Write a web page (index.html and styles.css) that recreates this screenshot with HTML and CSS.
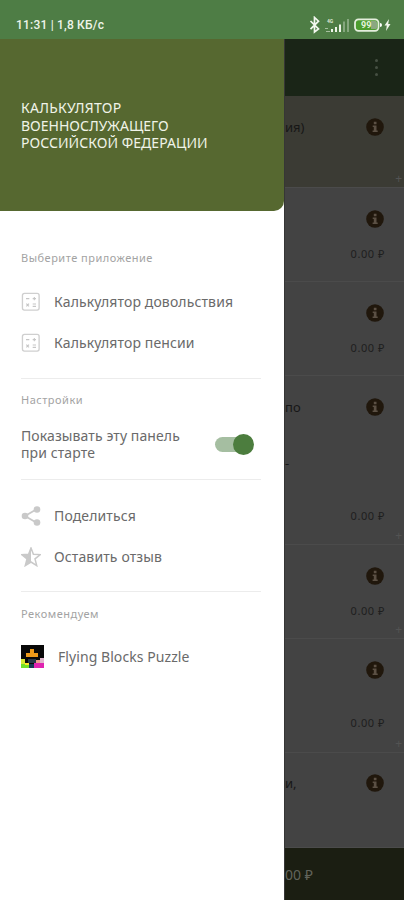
FILE: index.html
```
<!DOCTYPE html>
<html lang="ru">
<head>
<meta charset="utf-8">
<title>Калькулятор военнослужащего</title>
<link rel="stylesheet" href="styles.css">
</head>
<body>
<svg width="0" height="0" class="defs">
  <symbol id="info" viewBox="0 0 18 18"><circle cx="9" cy="9" r="8.8" fill="#20170c"/><path d="M7.8 3.8h2.7v2.4H7.800zM6.700 7.500h3.800v5h1.200v1.400H6.600v-1.400h1.200V9H6.700z" fill="#5b5044"/></symbol>
  <symbol id="calc" viewBox="0 0 18 18"><rect x="1.3" y="1.3" width="15" height="15" rx="1.8" fill="none" stroke="#cfcfcf" stroke-width="1.2"/><path d="M4.5 6h3M10.5 6h3M12 4.5v3M4.8 10.5l2.4 2.4M7.2 10.5l-2.4 2.4M10.5 10.8h3M10.5 12.900h3" stroke="#c6c6c6" fill="none"/></symbol>
</svg>
<header class="status">
  <span class="clock">11:31 | 1,8 КБ/с</span>
  <svg class="status-icons" width="82" height="18" viewBox="0 0 82 18">
    <path d="M1.500 5l8 8L5.500 16V1.500l4 3.700-8 8" fill="none" stroke="#f4f8f0" stroke-width="1.700"/>
    <g fill="#eef5e9"><path d="M22 13h2v3h-2zM26 11h2v5h-2zM30 8.500h2v7.500h-2z"/><path opacity=".35" d="M34 5.500h2v10.500h-2zM38 3h2v13h-2z"/><path opacity=".55" d="M16 12h3v1h-3zM17 15h4v1h-4z"/></g>
    <text x="18" y="6.500" class="net">4G</text>
    <rect x="46" y="3.300" width="23.500" height="11.500" rx="3.500" fill="#4c9d2e" stroke="#e4eedd" stroke-width="1.800"/>
    <path d="M62 5h4.500q1.500 0 1.500 1.500v5q0 1.500-1.500 1.500H62z" fill="#8ba781"/><path d="M71 7q2 0 2 2t-2 2z" fill="#fff"/>
    <text x="52" y="12.200" class="charge">99</text>
    <path d="M80 3l-4.500 6.500h2.300L77 15l4.500-7h-2.300z" fill="#f0f5ea"/>
  </svg>
</header>
<div class="stage">
  <aside class="drawer">
    <div class="banner"><span class="b1">КАЛЬКУЛЯТОР</span><br>ВОЕННОСЛУЖАЩЕГО<br><span class="b3">РОССИЙСКОЙ ФЕДЕРАЦИИ</span></div>
    <nav class="menu">
      <section class="apps">
        <h2>Выберите приложение</h2>
        <a class="item"><svg width="20" height="20"><use href="#calc"/></svg><span>Калькулятор довольствия</span></a>
        <a class="item"><svg width="20" height="20"><use href="#calc"/></svg><span>Калькулятор пенсии</span></a>
      </section>
      <section class="settings">
        <h2>Настройки</h2>
        <div class="setting"><div><div>Показывать эту панель</div><div>при старте</div></div><i class="switch"></i></div>
      </section>
      <section class="links">
        <a class="item"><svg width="20" height="20" viewBox="0 0 20 20"><g fill="#c9c9c9"><path d="M4 10l12-7M4 10l12 7" stroke="#c9c9c9" stroke-width="1.800"/><circle cx="4" cy="10" r="3.300"/><circle cx="16" cy="3.500" r="3.300"/><circle cx="16" cy="16.500" r="3.300"/></g></svg><span>Поделиться</span></a>
        <a class="item"><svg width="20" height="20" viewBox="0 0 20 20"><path d="M10 1l2.400 6.200 6.900.4-5.300 4.300 1.700 6.700L10 15l-5.700 3.600L6 11.900.7 7.600l6.900-.4z" fill="none" stroke="#c9c9c9" stroke-width="1.500"/><path d="M10 1v14l-5.700 3.600L6 11.900.7 7.600l6.900-.4z" fill="#c9c9c9"/></svg><span>Оставить отзыв</span></a>
      </section>
      <section class="promo">
        <h2>Рекомендуем</h2>
        <a class="item game"><svg width="23" height="23" viewBox="0 0 23 23"><path d="M0 0h23v23H0z" fill="#080808"/><path d="M9 4h4v4h4v4H5V8h4z" fill="#ed9919"/><path d="M7 14h8v4H7z" fill="#273747"/><path d="M0 14h4v5H0z" fill="#d5e731"/><path d="M0 19h8v4H0z" fill="#72df25"/><path d="M4 18h4v2H4z" fill="#ffe326"/><path d="M8 19h5v4H8z" fill="#163954"/><path d="M15 15h5v4h-5z" fill="#e99a8c"/><path d="M13 18h10v5H13z" fill="#df24b0"/><path d="M19 13h4v5h-4z" fill="#dfb6cc"/></svg><span>Flying Blocks Puzzle</span></a>
      </section>
    </nav>
  </aside>
  <main class="page">
    <div class="toolbar"><i></i><i></i><i></i></div>
    <div class="row r1"><b>ия)</b><svg class="info"><use href="#info"/></svg><em>+</em></div>
    <div class="row r2"><svg class="info"><use href="#info"/></svg><span>0.00 ₽</span></div>
    <div class="row r3"><svg class="info"><use href="#info"/></svg><span>0.00 ₽</span></div>
    <div class="row r4"><b>по</b><b class="dash">-</b><svg class="info"><use href="#info"/></svg><span>0.00 ₽</span><em>+</em></div>
    <div class="row r5"><svg class="info"><use href="#info"/></svg><span>0.00 ₽</span><em>+</em></div>
    <div class="row r6"><svg class="info"><use href="#info"/></svg><span>0.00 ₽</span><em>+</em></div>
    <div class="row r7"><b>и,</b><svg class="info"><use href="#info"/></svg></div>
    <footer class="total">00 ₽</footer>
  </main>
</div>
</body>
</html>
```
FILE: styles.css
```
* { box-sizing: border-box; }
body { margin: 0; width: 404px; height: 900px; overflow: hidden; background: #fff; font-family: "Noto Sans", "Open Sans", sans-serif; color: #6a6a6a; }
.defs { position: absolute; }
.status { height: 39px; background: #4e7d45; display: flex; justify-content: space-between; padding: 16px 13px 0 16px; color: #eef4ea; }
.clock { font: 500 12px/18px Roboto, sans-serif; letter-spacing: .2px; }
.net { font: 700 5px Roboto, sans-serif; fill: #dce8d5; }
.charge { font: 700 9px Roboto, sans-serif; fill: #e6f3df; }
.stage { display: flex; height: 861px; background: #434343; }
.drawer { width: 284px; background: #fff; flex: none; }
.banner { height: 172px; background: #566830; border-radius: 0 0 10px 0; padding: 60px 21px; color: #f0f4e8; font-size: 14px; line-height: 17.5px; white-space: nowrap; }
.b1 { letter-spacing: .27px; }
.b3 { letter-spacing: .05px; }
.menu { padding: 0 23px 0 21px; }
section { border-bottom: 1px solid #ececec; }
h2 { margin: 0; font-size: 11px; line-height: 16px; font-weight: 400; letter-spacing: .5px; color: #a3a3a3; white-space: nowrap; }
.apps { height: 168px; padding-top: 39px; }
.apps h2 { margin-bottom: 15px; }
.item { height: 41px; display: flex; align-items: center; gap: 13px; font-size: 14px; letter-spacing: .13px; white-space: nowrap; }
.settings { height: 101px; padding-top: 13px; }
.setting { display: flex; justify-content: space-between; align-items: center; font-size: 14px; line-height: 17px; letter-spacing: .1px; margin-top: 19px; padding-right: 7px; white-space: nowrap; }
.switch { width: 39px; height: 21px; display: flex; align-items: center; }
.switch::before { content: ""; width: 34px; height: 15px; margin-right: -16px; border-radius: 8px; background: #a5bea1; flex: none; }
.switch::after { content: ""; width: 21px; height: 21px; border-radius: 50%; background: #4c7d3e; flex: none; }
.links { height: 112px; padding-top: 15px; }
.promo { border: 0; padding-top: 14px; }
.game { margin-top: 14px; gap: 14px; letter-spacing: .07px; }
.page { flex: 1; min-width: 0; color: #171717; border-left: 1px solid #363636; }
.toolbar { height: 57px; background: #1a2517; display: flex; flex-direction: column; align-items: flex-end; padding: 20px 26px 0 0; gap: 4px; }
.toolbar i { width: 3px; height: 3px; border-radius: 50%; background: #465043; }
.row { display: grid; grid-template-columns: 1fr 18px; align-content: start; padding: 22px 20px 0 0; position: relative; border-bottom: 1px solid #4b4b4b; }
.info { width: 18px; height: 18px; grid-column: 2; grid-row: 1; }
.row b { font-size: 13px; line-height: 18px; font-weight: 400; grid-column: 1; grid-row: 1; }
.row span { grid-column: 1 / 3; text-align: right; font-size: 11px; line-height: 16px; letter-spacing: .55px; margin: 18px -1px 0 0; color: #1e1e1e; }
.row em { position: absolute; right: 2px; bottom: 0; font-size: 12px; line-height: 16px; font-style: normal; color: #535353; }
.r1 { height: 92px; background: #3b3b34; }
.r2, .r3, .r5 { height: 94px; }
.r4 { height: 169px; }
.row .dash { grid-row: 2; margin-top: 38px; }
.r4 span { margin-top: 36px; }
.r6 { height: 114px; }
.r6 span { margin-top: 36px; }
.r7 { height: 95px; padding-top: 21px; }
.total { height: 52px; background: #1b1e12; color: #62645c; font-size: 14px; line-height: 53px; }
```
